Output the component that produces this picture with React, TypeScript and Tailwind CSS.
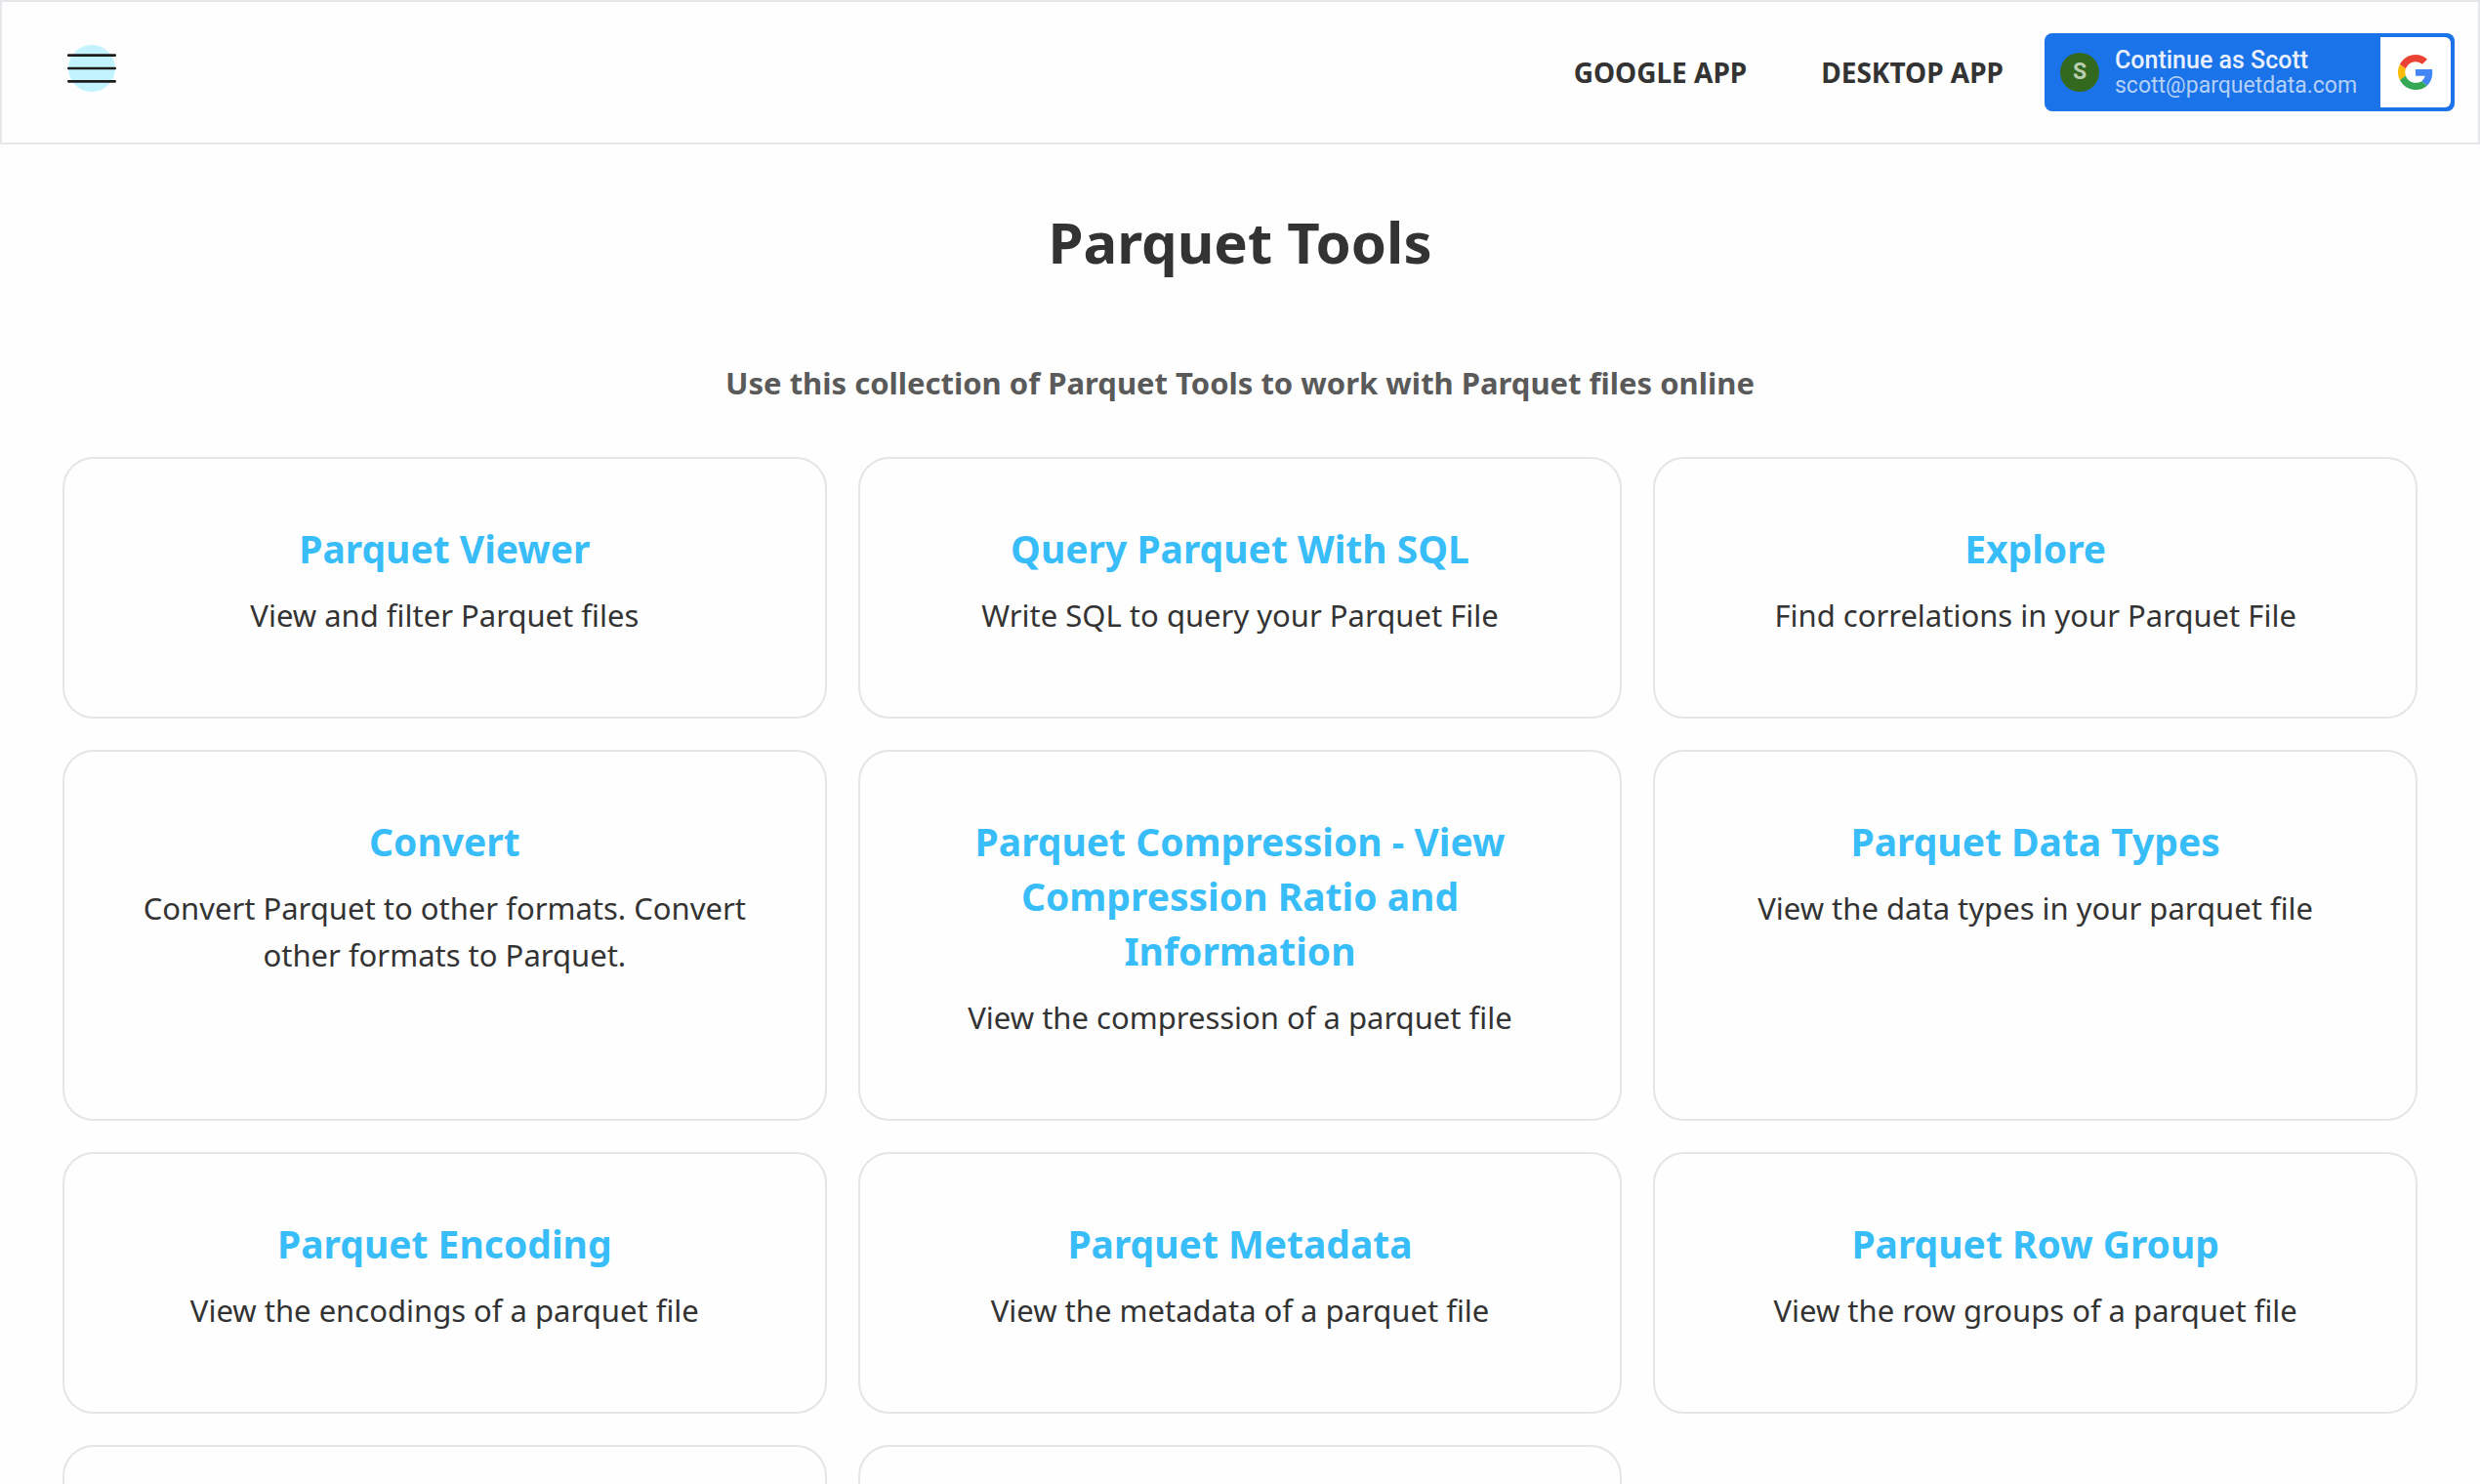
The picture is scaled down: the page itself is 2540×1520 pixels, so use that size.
const navLinks = [
  { title: "GOOGLE APP", href: "#google-app" },
  { title: "DESKTOP APP", href: "#desktop-app" },
]

const tools = [
  { title: "Parquet Viewer", desc: "View and filter Parquet files", href: "#viewer" },
  { title: "Query Parquet With SQL", desc: "Write SQL to query your Parquet File", href: "#sql" },
  { title: "Explore", desc: "Find correlations in your Parquet File", href: "#explore" },
  { title: "Convert", desc: "Convert Parquet to other formats. Convert other formats to Parquet.", href: "#convert" },
  { title: "Parquet Compression - View Compression Ratio and Information", desc: "View the compression of a parquet file", href: "#compression" },
  { title: "Parquet Data Types", desc: "View the data types in your parquet file", href: "#data-types" },
  { title: "Parquet Encoding", desc: "View the encodings of a parquet file", href: "#encoding" },
  { title: "Parquet Metadata", desc: "View the metadata of a parquet file", href: "#metadata" },
  { title: "Parquet Row Group", desc: "View the row groups of a parquet file", href: "#row-group" },
]

function MenuIcon() {
  return (
    <svg width="52" height="48" viewBox="0 0 52 48" aria-hidden="true">
      <circle cx="26" cy="24" r="24" fill="#c2f3ff" />
      <path d="M2.3 10.7H49.7M2.3 24H49.7M2.3 37.3H49.7" stroke="#1c1c1c" strokeWidth="2.7" strokeLinecap="round" />
    </svg>
  )
}

function GoogleIcon() {
  return (
    <svg width="36" height="36" viewBox="0 0 48 48" aria-hidden="true">
      <path fill="#EA4335" d="M24 9.5c3.54 0 6.71 1.22 9.21 3.6l6.85-6.85C35.9 2.38 30.47 0 24 0 14.62 0 6.51 5.38 2.56 13.22l7.98 6.19C12.43 13.72 17.74 9.5 24 9.5z" />
      <path fill="#4285F4" d="M46.98 24.55c0-1.57-.15-3.09-.38-4.55H24v9.02h12.94c-.58 2.96-2.26 5.48-4.78 7.18l7.73 6c4.51-4.18 7.09-10.36 7.09-17.65z" />
      <path fill="#FBBC05" d="M10.53 28.59c-.48-1.45-.76-2.99-.76-4.59s.27-3.14.76-4.59l-7.98-6.19C.92 16.46 0 20.12 0 24c0 3.88.92 7.54 2.56 10.78l7.97-6.19z" />
      <path fill="#34A853" d="M24 48c6.48 0 11.93-2.13 15.89-5.81l-7.73-6c-2.15 1.45-4.92 2.3-8.16 2.3-6.26 0-11.57-4.22-13.47-9.91l-7.98 6.19C6.51 42.62 14.62 48 24 48z" />
    </svg>
  )
}

function Header() {
  return (
    <header className="flex items-center justify-between border-2 border-[#e5e7eb] py-8 pr-6 pl-[66px]">
      <button aria-label="Open menu" className="mb-2 cursor-pointer">
        <MenuIcon />
      </button>
      <div className="flex items-center">
        <nav className="mr-[42px] flex gap-19">
          {navLinks.map((link) => (
            <a key={link.title} href={link.href} className="text-[28px] leading-10 font-bold">{link.title}</a>
          ))}
        </nav>
        <button className="flex h-20 w-[420px] cursor-pointer items-center rounded-lg bg-[#1a73e8] p-1 pl-4 text-left font-[Roboto,sans-serif]">
          <span className="flex size-10 items-center justify-center rounded-full bg-[#33691e] text-[23px] font-bold text-[#b9cdb0]">S</span>
          <span className="ml-4 flex flex-col pt-0.5">
            <span className="text-[25px] leading-[26px] font-medium text-[#e8f0fe]">Continue as Scott</span>
            <span className="text-[23px] leading-[26px] text-[#b5d0f7]">scott@parquetdata.com</span>
          </span>
          <span className="ml-auto flex size-18 items-center justify-center rounded-r-md bg-white">
            <GoogleIcon />
          </span>
        </button>
      </div>
    </header>
  )
}

export default function App() {
  return (
    <div className="h-screen overflow-hidden bg-[#fefefe] font-['Noto_Sans',sans-serif] text-[#333333]">
      <Header />
      <main className="px-16 text-center">
        <h1 className="pt-14 text-[58px] leading-[88px] font-bold">Parquet Tools</h1>
        <h2 className="mt-19 text-[31px] leading-12 font-bold text-[#5a5a5a]">
          Use this collection of Parquet Tools to work with Parquet files online
        </h2>
        <div className="mt-13 grid grid-cols-3 gap-8">
          {tools.map((tool) => (
            <a key={tool.title} href={tool.href} className="rounded-4xl border-2 border-[#e5e5e5] p-16">
              <h3 className="text-[39px] leading-14 font-bold text-[#38bdf8]">{tool.title}</h3>
              <p className="my-4 text-[31px] leading-12">{tool.desc}</p>
            </a>
          ))}
          <div className="h-[268px] rounded-4xl border-2 border-[#e5e5e5]"></div>
          <div className="h-[268px] rounded-4xl border-2 border-[#e5e5e5]"></div>
        </div>
      </main>
    </div>
  )
}
